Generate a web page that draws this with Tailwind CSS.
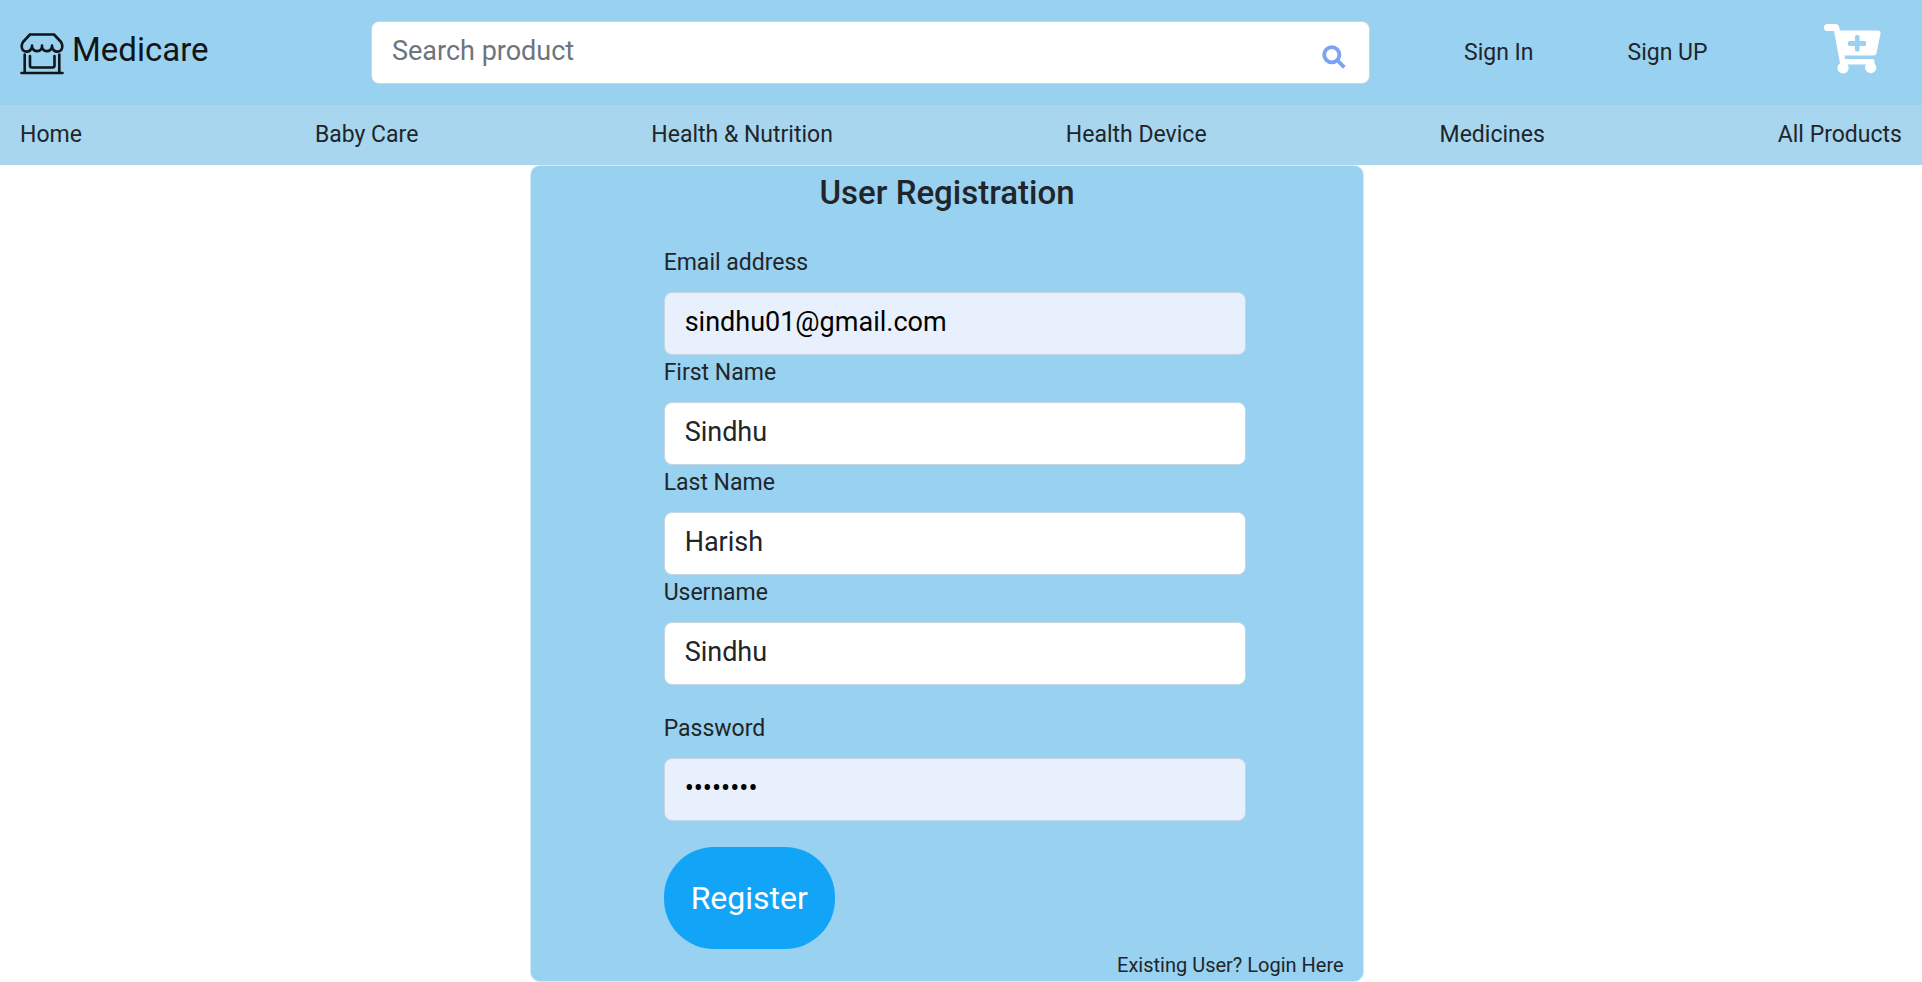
<!DOCTYPE html>
<html lang="en">
<head>
<meta charset="utf-8">
<meta name="viewport" content="width=device-width, initial-scale=1">
<title>Medicare - User Registration</title>
<script src="https://cdn.jsdelivr.net/npm/@tailwindcss/browser@4"></script>
</head>
<body class="bg-white font-[Roboto,sans-serif] text-[23px] leading-9 text-[#212529]">
<header class="flex h-[105px] items-start bg-[#99d1f0] px-5">
  <a href="#" class="flex w-[351px] shrink-0 items-start gap-2 pt-[30px] text-[33px] leading-10 text-[#111517]">
    <svg class="h-[46px] w-[44px]" viewBox="0 0 44 46" fill="none" stroke="currentColor" stroke-width="2.6" stroke-linecap="round" stroke-linejoin="round" aria-hidden="true">
      <path d="M10 4.500H34L41 12Q42.300 14 42.300 16.500C42 23 34 23.500 32 17V15.500M10 4.500L3 12Q1.700 14 1.700 16.500C2 23 10 23.500 12 17V15.500M12 17C14 23 21 22 22 17V15.500M22 17C23 22 30 23 32 17M4.700 24.500V43M39.300 24.500V43M10 26V35.500Q10 37.500 12 37.500H32.500Q34.500 37.500 34.500 35.500V26M1.500 43H42.500"/>
    </svg>
    <span>Medicare</span>
  </a>
  <form class="relative mt-[21px] flex-1">
    <input type="search" aria-label="Search product" placeholder="Search product" class="block h-[63px] w-full rounded-lg border border-[#ced4da] bg-white pr-20 pb-1 pl-5 text-[27px] placeholder:text-[#6c757d]">
    <button type="button" aria-label="Search" class="absolute top-6 right-6 text-[#7aa2f7]">
      <svg class="size-6" viewBox="0 0 24 24" fill="none" stroke="currentColor" stroke-width="3.800" aria-hidden="true"><circle cx="9.800" cy="9.800" r="7.600"/><path d="M15.200 15.200L22.300 22.300"/></svg>
    </button>
  </form>
  <nav class="flex w-[532px] shrink-0 items-start pr-[21px] pl-[94px]" aria-label="Account">
    <a href="#" class="mt-[35px] mr-[94px]">Sign In</a>
    <a href="#" class="mt-[35px]">Sign UP</a>
    <a href="#" aria-label="Cart" class="mt-6 ml-auto text-white">
      <svg class="h-[51px] w-[57px]" viewBox="0 0 57 51" aria-hidden="true">
        <path fill="currentColor" fill-rule="evenodd" d="M3 0H12Q14.500 0 15 2.500L16 6.500H54Q57 6.500 56.500 9.500L52.500 29Q52 31.500 49 31.500H20.500L21 35H48Q50.500 35 50.500 37.500V39.500A5.600 5.600 0 1 1 42 40.500H23.500A5.600 5.600 0 1 1 16 39.200L10 7H3Q0 7 0 3.500T3 0ZM31 12.500V17H25.500Q24 17 24 18.500V20.500Q24 22 25.500 22H31V26Q31 27.500 32.500 27.500H34Q35.500 27.500 35.500 26V22H40.500Q42 22 42 20.500V18.500Q42 17 40.500 17H35.500V12.500Q35.500 11 34 11H32.500Q31 11 31 12.500Z"/>
      </svg>
    </a>
  </nav>
</header>
<nav class="flex h-[60px] items-center justify-between bg-[#a8d6ef] px-5" aria-label="Categories">
  <a href="#">Home</a>
  <a href="#">Baby Care</a>
  <a href="#">Health &amp; Nutrition</a>
  <a href="#">Health Device</a>
  <a href="#">Medicines</a>
  <a href="#">All Products</a>
</nav>
<main class="flex">
  <section class="ml-[27.6%] w-[43.35%] rounded-[10px] border border-[#d0e9f7] bg-[#99d1f0]">
    <h1 class="mb-[25px] text-center text-[33px] leading-[54px] font-medium">User Registration</h1>
    <form class="mr-[14%] ml-[15.9%]">
      <label for="email" class="mb-[11px] block">Email address</label>
      <input id="email" type="email" value="sindhu01@gmail.com" class="block h-[63px] w-full rounded-lg border border-[#c4d5e3] bg-[#e8f0fe] px-5 pb-1 text-[27px] text-black">
      <label for="first" class="mb-[11px] block">First Name</label>
      <input id="first" type="text" value="Sindhu" class="block h-[63px] w-full rounded-lg border border-[#c4d5e3] bg-white px-5 pb-1 text-[27px]">
      <label for="last" class="mb-[11px] block">Last Name</label>
      <input id="last" type="text" value="Harish" class="block h-[63px] w-full rounded-lg border border-[#c4d5e3] bg-white px-5 pb-1 text-[27px]">
      <label for="username" class="mb-[11px] block">Username</label>
      <input id="username" type="text" value="Sindhu" class="block h-[63px] w-full rounded-lg border border-[#c4d5e3] bg-white px-5 pb-1 text-[27px]">
      <label for="password" class="mt-[26px] mb-[11px] block">Password</label>
      <input id="password" type="password" value="password" class="block h-[63px] w-full rounded-lg border border-[#c4d5e3] bg-[#e8f0fe] px-5 pb-1 text-[27px] text-black">
      <button type="submit" class="mt-[26px] block rounded-[50px] bg-[#12a5f7] px-[27px] py-[30px] text-[32px] leading-[42px] text-white">Register</button>
    </form>
    <p class="pr-[19px] text-right text-[20px] leading-8"><a href="#">Existing User? Login Here</a></p>
  </section>
</main>
</body>
</html>
